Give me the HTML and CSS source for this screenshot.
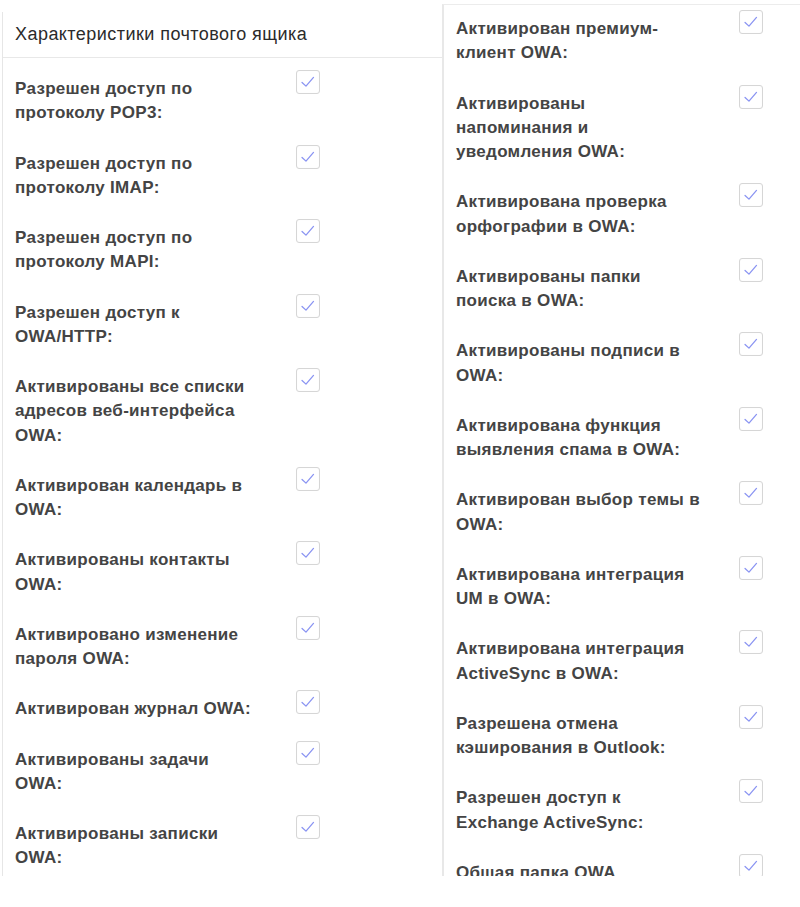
FILE: index.html
```html
<!DOCTYPE html>
<html lang="ru">
<head>
<meta charset="utf-8">
<title>Характеристики почтового ящика</title>
<link rel="stylesheet" href="styles.css">
</head>
<body>
<div class="page">
  <section class="panel panel-left">
    <div class="panel-header">Характеристики почтового ящика</div>
    <div class="list list-left">
      <div class="row"><span class="label">Разрешен доступ по протоколу POP3:</span><span class="cb"><svg viewBox="0 0 24 24"><path d="M5.5 12.5 L9.8 16.5 L18 7"/></svg></span></div>
      <div class="row"><span class="label">Разрешен доступ по протоколу IMAP:</span><span class="cb"><svg viewBox="0 0 24 24"><path d="M5.5 12.5 L9.8 16.5 L18 7"/></svg></span></div>
      <div class="row"><span class="label">Разрешен доступ по протоколу MAPI:</span><span class="cb"><svg viewBox="0 0 24 24"><path d="M5.5 12.5 L9.8 16.5 L18 7"/></svg></span></div>
      <div class="row"><span class="label">Разрешен доступ к OWA/HTTP:</span><span class="cb"><svg viewBox="0 0 24 24"><path d="M5.5 12.5 L9.8 16.5 L18 7"/></svg></span></div>
      <div class="row"><span class="label">Активированы все списки адресов веб-интерфейса OWA:</span><span class="cb"><svg viewBox="0 0 24 24"><path d="M5.5 12.5 L9.8 16.5 L18 7"/></svg></span></div>
      <div class="row"><span class="label">Активирован календарь в OWA:</span><span class="cb"><svg viewBox="0 0 24 24"><path d="M5.5 12.5 L9.8 16.5 L18 7"/></svg></span></div>
      <div class="row"><span class="label">Активированы контакты OWA:</span><span class="cb"><svg viewBox="0 0 24 24"><path d="M5.5 12.5 L9.8 16.5 L18 7"/></svg></span></div>
      <div class="row"><span class="label">Активировано изменение пароля OWA:</span><span class="cb"><svg viewBox="0 0 24 24"><path d="M5.5 12.5 L9.8 16.5 L18 7"/></svg></span></div>
      <div class="row"><span class="label">Активирован журнал OWA:</span><span class="cb"><svg viewBox="0 0 24 24"><path d="M5.5 12.5 L9.8 16.5 L18 7"/></svg></span></div>
      <div class="row"><span class="label">Активированы задачи OWA:</span><span class="cb"><svg viewBox="0 0 24 24"><path d="M5.5 12.5 L9.8 16.5 L18 7"/></svg></span></div>
      <div class="row"><span class="label">Активированы записки OWA:</span><span class="cb"><svg viewBox="0 0 24 24"><path d="M5.5 12.5 L9.8 16.5 L18 7"/></svg></span></div>
    </div>
  </section>
  <section class="panel panel-right">
    <div class="list list-right">
      <div class="row"><span class="label">Активирован премиум-клиент OWA:</span><span class="cb"><svg viewBox="0 0 24 24"><path d="M5.5 12.5 L9.8 16.5 L18 7"/></svg></span></div>
      <div class="row"><span class="label">Активированы напоминания и уведомления OWA:</span><span class="cb"><svg viewBox="0 0 24 24"><path d="M5.5 12.5 L9.8 16.5 L18 7"/></svg></span></div>
      <div class="row"><span class="label">Активирована проверка орфографии в OWA:</span><span class="cb"><svg viewBox="0 0 24 24"><path d="M5.5 12.5 L9.8 16.5 L18 7"/></svg></span></div>
      <div class="row"><span class="label">Активированы папки поиска в OWA:</span><span class="cb"><svg viewBox="0 0 24 24"><path d="M5.5 12.5 L9.8 16.5 L18 7"/></svg></span></div>
      <div class="row"><span class="label">Активированы подписи в OWA:</span><span class="cb"><svg viewBox="0 0 24 24"><path d="M5.5 12.5 L9.8 16.5 L18 7"/></svg></span></div>
      <div class="row"><span class="label">Активирована функция выявления спама в OWA:</span><span class="cb"><svg viewBox="0 0 24 24"><path d="M5.5 12.5 L9.8 16.5 L18 7"/></svg></span></div>
      <div class="row"><span class="label">Активирован выбор темы в OWA:</span><span class="cb"><svg viewBox="0 0 24 24"><path d="M5.5 12.5 L9.8 16.5 L18 7"/></svg></span></div>
      <div class="row"><span class="label">Активирована интеграция UM в OWA:</span><span class="cb"><svg viewBox="0 0 24 24"><path d="M5.5 12.5 L9.8 16.5 L18 7"/></svg></span></div>
      <div class="row"><span class="label">Активирована интеграция ActiveSync в OWA:</span><span class="cb"><svg viewBox="0 0 24 24"><path d="M5.5 12.5 L9.8 16.5 L18 7"/></svg></span></div>
      <div class="row"><span class="label">Разрешена отмена кэширования в Outlook:</span><span class="cb"><svg viewBox="0 0 24 24"><path d="M5.5 12.5 L9.8 16.5 L18 7"/></svg></span></div>
      <div class="row"><span class="label">Разрешен доступ к Exchange ActiveSync:</span><span class="cb"><svg viewBox="0 0 24 24"><path d="M5.5 12.5 L9.8 16.5 L18 7"/></svg></span></div>
      <div class="row"><span class="label">Обшая папка OWA включена:</span><span class="cb"><svg viewBox="0 0 24 24"><path d="M5.5 12.5 L9.8 16.5 L18 7"/></svg></span></div>
    </div>
  </section>
</div>
</body>
</html>
```
FILE: styles.css
```css
html, body {
  margin: 0;
  padding: 0;
  background: #ffffff;
}

body {
  font-family: "Liberation Sans", Arial, sans-serif;
  font-size: 17px;
  color: #444444;
}

.page {
  display: flex;
  align-items: flex-start;
  width: 800px;
  height: 907px;
  overflow: hidden;
}

.panel {
  box-sizing: border-box;
  overflow: hidden;
  flex: none;
}

.panel-left {
  margin-top: 12px;
  margin-left: 2px;
  width: 440px;
  height: 864px;
  border-left: 1px solid #e6e6e6;
}

.panel-right {
  margin-top: 4px;
  width: 358px;
  height: 872px;
  border-left: 2px solid #e8e8e8;
  border-top: 1px solid #ececec;
}

.panel-header {
  padding: 10px 12px 11px;
  font-size: 18px;
  letter-spacing: 0.45px;
  line-height: 24px;
  color: #2b2b2b;
  border-bottom: 1px solid #e8e8e8;
}

.list {
  display: flex;
  flex-direction: column;
  gap: 26px;
}

.list-left {
  padding: 19px 0 0 12px;
}

.list-right {
  padding: 12px 0 0 12px;
}

.row {
  display: flex;
  align-items: flex-start;
}

.label {
  box-sizing: border-box;
  width: 281px;
  padding-right: 36px;
  font-weight: bold;
  letter-spacing: 0.3px;
  line-height: 24.25px;
  color: #444444;
}

.list-right .label {
  width: 283px;
  padding-right: 36px;
}

.cb {
  box-sizing: border-box;
  width: 24px;
  height: 24px;
  margin-top: -7px;
  border: 1px solid #d6d6d6;
  border-radius: 3px;
  background: #ffffff;
  box-shadow: inset 0 0 1px #eeeeee;
  flex: none;
}

.cb svg {
  display: block;
  width: 22px;
  height: 22px;
}

.cb path {
  fill: none;
  stroke: #8a94f2;
  stroke-width: 1.4;
  stroke-linecap: round;
  stroke-linejoin: round;
}
```
